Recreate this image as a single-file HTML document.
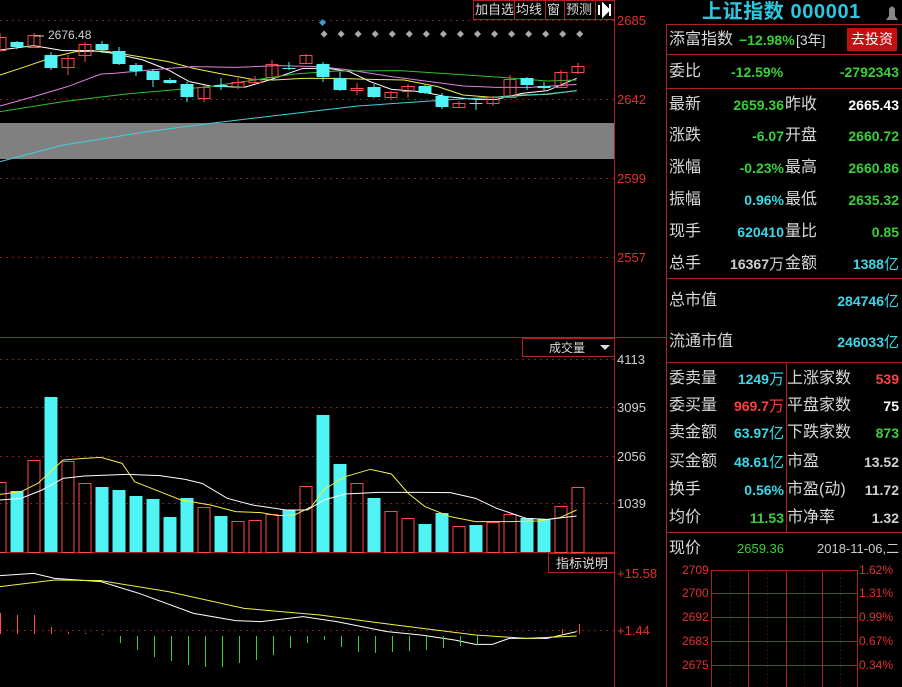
<!DOCTYPE html>
<html><head><meta charset="utf-8"><style>
body{margin:0;background:#000;width:902px;height:687px;overflow:hidden;position:relative;font-family:"Liberation Sans","Noto Sans CJK SC",sans-serif}
.t{position:absolute;white-space:nowrap;line-height:20px}
.l{font-size:16px;color:#d8d8d8}
.n{font-size:14px;font-weight:bold}
.g{color:#3ad03a}.c{color:#3cd8e8}.w{color:#fff}.r{color:#ff4040}.gr{color:#d0d0d0}
.ax{position:absolute;left:617px;font-size:13px;color:#e03030}
.ax2{position:absolute;left:617px;font-size:13px;color:#d0d0d0}
</style></head><body>
<svg width="902" height="687" style="position:absolute;left:0;top:0">
<g stroke="#8a1a1a" stroke-dasharray="2,4" stroke-width="1">
<line x1="0" y1="20.5" x2="614" y2="20.5"/><line x1="0" y1="99.5" x2="614" y2="99.5"/><line x1="0" y1="178.5" x2="614" y2="178.5"/><line x1="0" y1="257.5" x2="614" y2="257.5"/>
<line x1="0" y1="359.5" x2="614" y2="359.5"/><line x1="0" y1="407.5" x2="614" y2="407.5"/><line x1="0" y1="456.5" x2="614" y2="456.5"/><line x1="0" y1="503.5" x2="614" y2="503.5"/>
<line x1="0" y1="630.5" x2="614" y2="630.5"/>
</g>
<rect x="0" y="123" width="614" height="36" fill="#808080"/>
<g stroke="#b02020" stroke-width="1" fill="none">
<line x1="614.5" y1="0" x2="614.5" y2="687"/><line x1="666.5" y1="24" x2="666.5" y2="687"/>
<line x1="0" y1="337.5" x2="666" y2="337.5"/><line x1="0" y1="552.5" x2="614" y2="552.5"/>
<rect x="473.5" y="0.5" width="141" height="19"/>
<line x1="514.5" y1="0" x2="514.5" y2="20"/><line x1="545.5" y1="0" x2="545.5" y2="20"/><line x1="564.5" y1="0" x2="564.5" y2="20"/><line x1="595.5" y1="0" x2="595.5" y2="20"/>
<rect x="522.5" y="338.5" width="92" height="18"/>
<rect x="548.5" y="553.5" width="66" height="19"/>
<line x1="666" y1="24.5" x2="902" y2="24.5"/><line x1="666" y1="54.5" x2="902" y2="54.5"/><line x1="666" y1="88.5" x2="902" y2="88.5"/><line x1="666" y1="278.5" x2="902" y2="278.5"/><line x1="666" y1="362.5" x2="902" y2="362.5"/><line x1="666" y1="532.5" x2="902" y2="532.5"/>
<line x1="786.5" y1="362" x2="786.5" y2="532"/>
</g>
<polygon points="600,345 610,345 605,350" fill="#ddd"/>
<g transform="scale(0.42088,0.33333)">
<g fill="none" stroke-width="1">
<polyline vector-effect="non-scaling-stroke" stroke="#ffffff" points="0,150 80,137 150,152 220,152 270,160 340,180 400,210 450,245 500,258 580,262 640,240 720,205 780,205 830,215 880,245 930,268 1000,275 1060,290 1130,298 1180,298 1240,280 1300,272 1370,235"/>
<polyline vector-effect="non-scaling-stroke" stroke="#f0f040" points="0,225 60,200 130,170 180,155 250,153 330,170 400,185 460,205 520,220 600,238 650,240 720,235 800,235 880,238 960,240 1040,260 1100,285 1170,292 1240,285 1300,283 1370,272"/>
<polyline vector-effect="non-scaling-stroke" stroke="#e080e0" points="0,318 80,290 160,260 240,222 270,220 400,205 460,200 560,202 660,197 760,200 830,210 930,230 1040,248 1100,258 1180,262 1260,262 1370,253"/>
<polyline vector-effect="non-scaling-stroke" stroke="#30c030" points="0,335 150,305 300,282 480,262 580,245 700,222 800,213 950,212 1050,220 1200,233 1300,243 1370,240"/>
<polyline vector-effect="non-scaling-stroke" stroke="#40d0e0" points="0,485 150,435 350,395 500,370 700,340 850,318 1000,305 1080,298 1200,290 1300,282 1370,272"/>
</g>
</g>
<g id="cd"></g>
<g id="vol"></g>
<g transform="translate(0,330) scale(0.42088,0.33333)" fill="none">
<polyline vector-effect="non-scaling-stroke" stroke="#f0f040" points="0,493 50,485 90,460 150,390 200,385 240,382 290,400 320,455 380,485 430,510 500,525 560,545 620,548 660,557 700,555 740,530 770,478 820,440 880,418 930,432 970,490 1010,530 1070,560 1130,575 1200,575 1280,573 1330,563 1370,540"/>
<polyline vector-effect="non-scaling-stroke" stroke="#fff" points="0,510 50,505 100,480 150,445 200,438 300,433 380,437 440,448 480,460 540,505 600,525 680,540 730,540 770,510 820,492 900,487 1000,487 1070,488 1130,505 1180,535 1250,565 1300,568 1370,558"/>
<polyline vector-effect="non-scaling-stroke" stroke="#fff" points="0,737 80,730 130,745 240,755 330,790 460,850 560,872 620,875 720,860 800,875 920,905 1000,915 1080,930 1130,943 1170,943 1210,925 1300,925 1370,905"/>
<polyline vector-effect="non-scaling-stroke" stroke="#f0f040" points="0,770 130,750 240,752 400,785 580,835 760,855 940,885 1130,915 1250,925 1370,918"/>
</g>
<g id="macd"></g>
<g id="dia"></g>
<g stroke="#b02020" fill="none">
<rect x="711.5" y="570.5" width="146" height="130"/>
<line x1="711" y1="593.5" x2="858" y2="593.5"/><line x1="711" y1="617.5" x2="858" y2="617.5"/><line x1="711" y1="641.5" x2="858" y2="641.5"/><line x1="711" y1="665.5" x2="858" y2="665.5"/>
<line x1="748.5" y1="570" x2="748.5" y2="687"/><line x1="786.5" y1="570" x2="786.5" y2="687"/><line x1="822.5" y1="570" x2="822.5" y2="687"/>
</g>
<g stroke="#6a1010" stroke-dasharray="1,3"><line x1="730.5" y1="570" x2="730.5" y2="687"/><line x1="767.5" y1="570" x2="767.5" y2="687"/><line x1="804.5" y1="570" x2="804.5" y2="687"/><line x1="840.5" y1="570" x2="840.5" y2="687"/></g>
<path d="M886 20 L898 20 L895 16 L895 9 Q892 4 889 9 L889 16 Z" fill="#888"/>
<path d="M599 5 L599 15 M603 4 L609 10 L603 16 Z M610 4 L610 16" stroke="#fff" fill="#fff" stroke-width="2"/>
</svg>
<script>
var NS="http://www.w3.org/2000/svg";
function el(p,t,a){var e=document.createElementNS(NS,t);for(var k in a)e.setAttribute(k,a[k]);p.appendChild(e);return e;}
var R="#ff4a4a",C="#50f4f4";
var cd=[[-1,'r',37,50,33,52],[0,'c',42,47,41,49],[1,'r',35,47,33,48],[2,'c',55,68,52,70],[3,'r',58,67,55,75],[4,'r',44,55,42,62],[5,'c',44,50,41,53],[6,'c',51,64,47,65],[7,'c',65,71,63,76],[8,'c',71,80,69,87],[9,'c',80,83,78,84],[10,'c',84,97,82,102],[11,'r',87,98,85,102],[12,'c',85,87,78,90],[13,'r',82,87,78,89],[14,'r',79,82,76,84],[15,'r',64,77,60,78],[16,'c',68,69,62,70],[17,'r',55,63,54,64],[18,'c',64,77,62,82],[19,'c',78,90,72,91],[20,'r',88,90,83,95],[21,'c',87,97,84,98],[22,'r',92,97,91,99],[23,'r',86,91,84,98],[24,'c',86,93,85,94],[25,'c',96,107,93,109],[26,'r',103,107,101,108],[27,'c',103,104,99,110],[28,'r',97,103,96,106],[29,'r',79,97,75,98],[30,'c',78,85,77,90],[31,'c',86,88,82,90],[32,'r',72,87,70,88],[33,'r',66,72,63,74]];
var g=document.getElementById('cd');
cd.forEach(function(d){var x=10.5+17*d[0],col=d[1]=='r'?R:C;
el(g,'line',{x1:x+6.5,y1:d[4],x2:x+6.5,y2:d[5],stroke:col});
if(d[1]=='r')el(g,'rect',{x:x+0.5,y:d[2]+0.5,width:12,height:Math.max(d[3]-d[2],1),fill:'none',stroke:col});
else el(g,'rect',{x:x,y:d[2],width:13,height:Math.max(d[3]-d[2],1),fill:col});});
var vol=[[-1,'r',482],[0,'c',491],[1,'r',460],[2,'c',397],[3,'r',461],[4,'r',483],[5,'c',487],[6,'c',490],[7,'c',496],[8,'c',499],[9,'c',517],[10,'c',498],[11,'r',507],[12,'c',516],[13,'r',521],[14,'r',520],[15,'r',514],[16,'c',510],[17,'r',486],[18,'c',415],[19,'c',464],[20,'r',483],[21,'c',498],[22,'r',511],[23,'r',518],[24,'c',524],[25,'c',513],[26,'r',526],[27,'c',525],[28,'r',522],[29,'r',514],[30,'c',518],[31,'c',519],[32,'r',506],[33,'r',487]];
var v=document.getElementById('vol');
vol.forEach(function(d){var x=10.5+17*d[0];
if(d[1]=='r')el(v,'rect',{x:x+0.5,y:d[2]+0.5,width:12,height:552-d[2],fill:'none',stroke:R});
else el(v,'rect',{x:x,y:d[2],width:13,height:552-d[2],fill:C});});
var m=document.getElementById('macd');
var reds=[[0,613],[17,615],[34,615],[51,627],[68,632],[85,633],[102,635]];
reds.forEach(function(r){el(m,'line',{x1:r[0]+0.5,y1:r[1],x2:r[0]+0.5,y2:634,stroke:R});});
var gl=[643,650,657,661,665,667,667,663,660,655,648,643,640,647,652,653,652,651,650,648,646,645];
gl.forEach(function(h,i){var x=Math.round((284+40.5*i)/2.376)+0.5;el(m,'line',{x1:x,y1:636,x2:x,y2:h,stroke:'#30d030'});});
el(m,'line',{x1:579.5,y1:624,x2:579.5,y2:634,stroke:R});el(m,'line',{x1:562.5,y1:629,x2:562.5,y2:634,stroke:R});
var di=document.getElementById('dia');
el(di,'rect',{x:320,y:20,width:5,height:5,fill:'#3aa0d0',transform:'rotate(45 322.5 22.5)'});
for(var i=0;i<16;i++){var x=(770+40.5*i)/2.376;el(di,'rect',{x:x-2.5,y:31.5,width:5,height:5,fill:'#aaa',transform:'rotate(45 '+x+' 34)'});}
el(di,'line',{x1:34,y1:36,x2:44,y2:36,stroke:'#ccc'});
</script>
<div class="t" style="left:48px;top:25px;font-size:12px;color:#d0d0d0">2676.48</div>
<div class="t" style="left:475px;top:0px;font-size:13px;color:#ddd">加自选</div>
<div class="t" style="left:516px;top:0px;font-size:13px;color:#ddd">均线</div>
<div class="t" style="left:547px;top:0px;font-size:13px;color:#ddd">窗</div>
<div class="t" style="left:566px;top:0px;font-size:13px;color:#ddd">预测</div>
<div class="ax" style="top:13px">2685</div><div class="ax" style="top:92px">2642</div><div class="ax" style="top:171px">2599</div><div class="ax" style="top:250px">2557</div>
<div class="t" style="left:549px;top:338px;font-size:12px;color:#ddd">成交量</div>
<div class="ax2" style="top:352px">4113</div><div class="ax2" style="top:400px">3095</div><div class="ax2" style="top:449px">2056</div><div class="ax2" style="top:496px">1039</div>
<div class="t" style="left:556px;top:554px;font-size:13px;color:#ddd">指标说明</div>
<div class="ax" style="top:566px">+15.58</div><div class="ax" style="top:623px">+1.44</div>
<div class="t" style="left:702px;top:2px;font-size:20px;font-weight:bold;color:#2cc8e0;letter-spacing:0.6px">上证指数 000001</div>
<div class="t l" style="left:669px;top:30px">添富指数</div><div class="t n g" style="left:739px;top:30px">−12.98%</div><div class="t l" style="left:796px;top:30px;font-size:14px">[3年]</div>
<div class="t" style="left:847px;top:28px;width:50px;height:23px;background:#c01010;color:#fff;font-size:14px;text-align:center;line-height:23px">去投资</div>
<div class="t l" style="left:669px;top:62px">委比</div><div class="t n g" style="left:731px;top:62px">-12.59%</div><div class="t n g" style="right:3px;top:62px">-2792343</div>
<div class="t l" style="left:669px;top:95px">最新</div><div class="t n g" style="right:118px;top:95px">2659.36</div><div class="t l" style="left:785px;top:95px">昨收</div><div class="t n w" style="right:3px;top:95px">2665.43</div>
<div class="t l" style="left:669px;top:126px">涨跌</div><div class="t n g" style="right:118px;top:126px">-6.07</div><div class="t l" style="left:785px;top:126px">开盘</div><div class="t n g" style="right:3px;top:126px">2660.72</div>
<div class="t l" style="left:669px;top:158px">涨幅</div><div class="t n g" style="right:118px;top:158px">-0.23%</div><div class="t l" style="left:785px;top:158px">最高</div><div class="t n g" style="right:3px;top:158px">2660.86</div>
<div class="t l" style="left:669px;top:190px">振幅</div><div class="t n c" style="right:118px;top:190px">0.96%</div><div class="t l" style="left:785px;top:190px">最低</div><div class="t n g" style="right:3px;top:190px">2635.32</div>
<div class="t l" style="left:669px;top:222px">现手</div><div class="t n c" style="right:118px;top:222px">620410</div><div class="t l" style="left:785px;top:222px">量比</div><div class="t n g" style="right:3px;top:222px">0.85</div>
<div class="t l" style="left:669px;top:254px">总手</div><div class="t n gr" style="right:118px;top:254px">16367<span style="font-weight:normal;font-size:15px">万</span></div><div class="t l" style="left:785px;top:254px">金额</div><div class="t n c" style="right:3px;top:254px">1388<span style="font-weight:normal;font-size:15px">亿</span></div>
<div class="t l" style="left:669px;top:291px">总市值</div><div class="t n c" style="right:3px;top:291px">284746<span style="font-weight:normal;font-size:15px">亿</span></div>
<div class="t l" style="left:669px;top:332px">流通市值</div><div class="t n c" style="right:3px;top:332px">246033<span style="font-weight:normal;font-size:15px">亿</span></div>
<div class="t l" style="left:669px;top:369px">委卖量</div><div class="t n c" style="right:118px;top:369px">1249<span style="font-weight:normal;font-size:15px">万</span></div><div class="t l" style="left:787px;top:369px">上涨家数</div><div class="t n r" style="right:3px;top:369px">539</div>
<div class="t l" style="left:669px;top:396px">委买量</div><div class="t n r" style="right:118px;top:396px">969.7<span style="font-weight:normal;font-size:15px">万</span></div><div class="t l" style="left:787px;top:396px">平盘家数</div><div class="t n w" style="right:3px;top:396px">75</div>
<div class="t l" style="left:669px;top:423px">卖金额</div><div class="t n c" style="right:118px;top:423px">63.97<span style="font-weight:normal;font-size:15px">亿</span></div><div class="t l" style="left:787px;top:423px">下跌家数</div><div class="t n g" style="right:3px;top:423px">873</div>
<div class="t l" style="left:669px;top:452px">买金额</div><div class="t n c" style="right:118px;top:452px">48.61<span style="font-weight:normal;font-size:15px">亿</span></div><div class="t l" style="left:787px;top:452px">市盈</div><div class="t n gr" style="right:3px;top:452px">13.52</div>
<div class="t l" style="left:669px;top:480px">换手</div><div class="t n c" style="right:118px;top:480px">0.56%</div><div class="t l" style="left:787px;top:480px">市盈(动)</div><div class="t n gr" style="right:3px;top:480px">11.72</div>
<div class="t l" style="left:669px;top:508px">均价</div><div class="t n g" style="right:118px;top:508px">11.53</div><div class="t l" style="left:787px;top:508px">市净率</div><div class="t n gr" style="right:3px;top:508px">1.32</div>
<div class="t l" style="left:669px;top:539px">现价</div><div class="t g" style="left:737px;top:539px;font-size:13px">2659.36</div><div class="t" style="left:817px;top:539px;font-size:13px;color:#ccc">2018-11-06,二</div>
<div class="t" style="left:682px;top:560px;font-size:12px;color:#e03030">2709</div><div class="t" style="left:682px;top:583px;font-size:12px;color:#e03030">2700</div><div class="t" style="left:682px;top:607px;font-size:12px;color:#e03030">2692</div><div class="t" style="left:682px;top:631px;font-size:12px;color:#e03030">2683</div><div class="t" style="left:682px;top:655px;font-size:12px;color:#e03030">2675</div>
<div class="t" style="left:859px;top:560px;font-size:12px;color:#e03030">1.62%</div><div class="t" style="left:859px;top:583px;font-size:12px;color:#e03030">1.31%</div><div class="t" style="left:859px;top:607px;font-size:12px;color:#e03030">0.99%</div><div class="t" style="left:859px;top:631px;font-size:12px;color:#e03030">0.67%</div><div class="t" style="left:859px;top:655px;font-size:12px;color:#e03030">0.34%</div>
</body></html>
